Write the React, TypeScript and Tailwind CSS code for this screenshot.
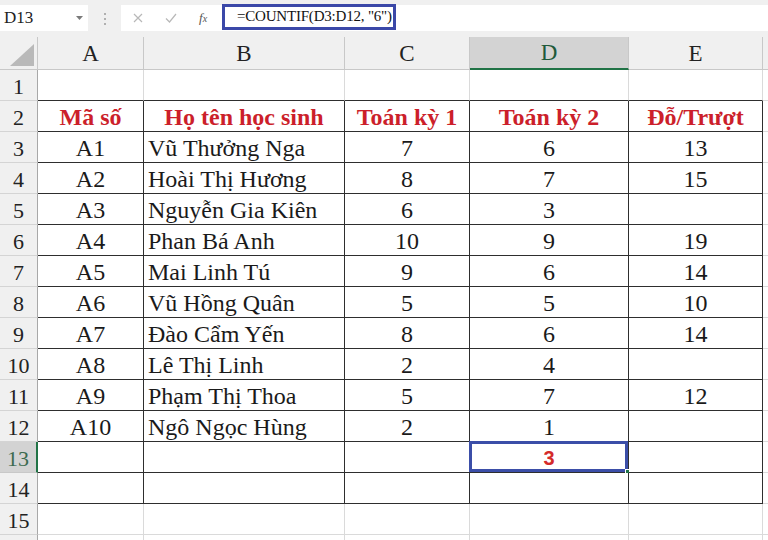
import React from 'react';

const serif = { fontFamily: '"Liberation Serif", "Times New Roman", serif' };

const widths = [38, 106, 201, 125, 159, 134];
const letters = ['A', 'B', 'C', 'D', 'E'];

type Row = [string, string, string, string, string];

const data: Record<number, Row> = {
  2: ['Mã số', 'Họ tên học sinh', 'Toán kỳ 1', 'Toán kỳ 2', 'Đỗ/Trượt'],
  3: ['A1', 'Vũ Thưởng Nga', '7', '6', '13'],
  4: ['A2', 'Hoài Thị Hương', '8', '7', '15'],
  5: ['A3', 'Nguyễn Gia Kiên', '6', '3', ''],
  6: ['A4', 'Phan Bá Anh', '10', '9', '19'],
  7: ['A5', 'Mai Linh Tú', '9', '6', '14'],
  8: ['A6', 'Vũ Hồng Quân', '5', '5', '10'],
  9: ['A7', 'Đào Cẩm Yến', '8', '6', '14'],
  10: ['A8', 'Lê Thị Linh', '2', '4', ''],
  11: ['A9', 'Phạm Thị Thoa', '5', '7', '12'],
  12: ['A10', 'Ngô Ngọc Hùng', '2', '1', ''],
};

const FormulaBar: React.FC = () => (
  <div className="flex h-[37px] items-start bg-[#f0f0f0] pt-[5px]" style={serif}>
    {/* Name box */}
    <div className="relative flex h-[26px] w-[88px] items-center bg-white pl-[4px] text-[17px] text-[#222]" style={serif}>
      D13
      <svg className="absolute right-[5px] top-[11px]" width="7" height="4" viewBox="0 0 7 4">
        <path d="M0 0 L7 0 L3.5 4 Z" fill="#7a7a7a" />
      </svg>
    </div>
    {/* Dots */}
    <div className="flex w-[33px] flex-col items-center gap-[3px] pt-[8px]">
      <span className="h-[2px] w-[2px] bg-[#b0b0b0]" />
      <span className="h-[2px] w-[2px] bg-[#b0b0b0]" />
      <span className="h-[2px] w-[2px] bg-[#b0b0b0]" />
    </div>
    {/* Cancel / Enter / fx */}
    <div className="flex h-[26px] w-[101px] items-center bg-white">
      <svg className="ml-[12px]" width="10" height="10" viewBox="0 0 10 10">
        <path d="M1 1 L9 9 M9 1 L1 9" stroke="#b8b8b8" strokeWidth="1.2" />
      </svg>
      <svg className="ml-[22px]" width="12" height="10" viewBox="0 0 12 10">
        <path d="M1 5.5 L4.5 9 L11 1" stroke="#b8b8b8" strokeWidth="1.2" fill="none" />
      </svg>
      <span className="ml-[22px] text-[13px] italic text-[#555]" style={serif}>
        f<span className="text-[10px]">x</span>
      </span>
    </div>
    {/* Formula input */}
    <div className="flex h-[26px] flex-1 items-center bg-white">
      <div
        className="-mt-[3px] flex h-[26px] w-[174px] items-center whitespace-nowrap border-[3px] border-[#3b48a8] pl-[12px] text-[15px] tracking-[-0.2px] text-[#111]"
        style={serif}
      >
        =COUNTIF(D3:D12, "6")
      </div>
    </div>
  </div>
);

const HeaderRow: React.FC = () => (
  <div className="flex h-[33px] bg-[#f0f0f0]" style={serif}>
    <div className="relative w-[38px] shrink-0 border-b border-r border-[#c8c8c8]">
      <svg className="absolute bottom-[3px] right-[3px]" width="24" height="22" viewBox="0 0 24 22">
        <path d="M24 0 L24 22 L0 22 Z" fill="#b9b9b9" />
      </svg>
    </div>
    {letters.map((l, i) => (
      <div
        key={l}
        style={{ width: widths[i + 1], ...serif }}
        className={
          l === 'D'
            ? 'flex shrink-0 items-center justify-center border-b-2 border-r border-b-[#217346] border-r-[#c8c8c8] bg-[#d3d3d3] pt-[2px] text-[23px] text-[#1f5a3a]'
            : 'flex shrink-0 items-center justify-center border-b border-r border-[#c8c8c8] pt-[2px] text-[23px] text-[#222]'
        }
      >
        {l}
      </div>
    ))}
    <div className="flex-1 border-b border-[#c8c8c8]" />
  </div>
);

const SheetRow: React.FC<{ r: number }> = ({ r }) => {
  const inTable = r >= 2 && r <= 14;
  const values = data[r];
  const selected = r === 13;
  return (
    <div className="flex h-[31px]" style={serif}>
      <div
        style={serif}
        className={
          selected
            ? 'flex w-[38px] shrink-0 items-center justify-center border-b border-r-2 border-b-[#c8c8c8] border-r-[#217346] bg-[#d3d3d3] pt-[2px] text-[22px] text-[#3d6b50]'
            : 'flex w-[38px] shrink-0 items-center justify-center border-b border-r border-b-[#d4d4d4] border-r-[#a8a8a8] bg-[#f0f0f0] pt-[2px] text-[22px] text-[#222]'
        }
      >
        {r <= 15 ? r : ''}
      </div>
      {letters.map((l, i) => {
        const v = values ? values[i] : '';
        const darkBottom = r >= 1 && r <= 14;
        const header = r === 2;
        const align = l === 'B' && !header ? 'justify-start pl-[4px]' : 'justify-center';
        return (
          <div
            key={l}
            style={{ width: widths[i + 1], ...serif }}
            className={[
              'relative flex shrink-0 items-center whitespace-nowrap bg-white pt-[2px] text-[24px] leading-none',
              align,
              darkBottom ? 'border-b border-b-[#2e2e2e]' : 'border-b border-b-[#dadada]',
              inTable ? 'border-r border-r-[#2e2e2e]' : 'border-r border-r-[#dadada]',
              header ? 'font-bold text-[#cc1f2b]' : 'text-[#1a1a1a]',
            ].join(' ')}
          >
            {v}
            {selected && l === 'D' && (
              <>
                <span
                  className="text-[20px] font-bold text-[#d42a2a]"
                  style={{ fontFamily: '"Liberation Sans", Arial, sans-serif' }}
                >
                  3
                </span>
                <div className="absolute -left-px -top-px bottom-0 right-0 border-[3px] border-[#3b4ea8]" />
                <div className="absolute -bottom-[3px] -right-[3px] h-[6px] w-[6px] border border-white bg-[#217346]" />
              </>
            )}
          </div>
        );
      })}
      <div className="flex-1 border-b border-[#dadada] bg-white" />
    </div>
  );
};

export default function App() {
  const rows = Array.from({ length: 16 }, (_, i) => i + 1);
  return (
    <div className="h-[540px] w-[768px] overflow-hidden bg-white">
      <FormulaBar />
      <HeaderRow />
      {rows.map((r) => (
        <SheetRow key={r} r={r} />
      ))}
    </div>
  );
}
